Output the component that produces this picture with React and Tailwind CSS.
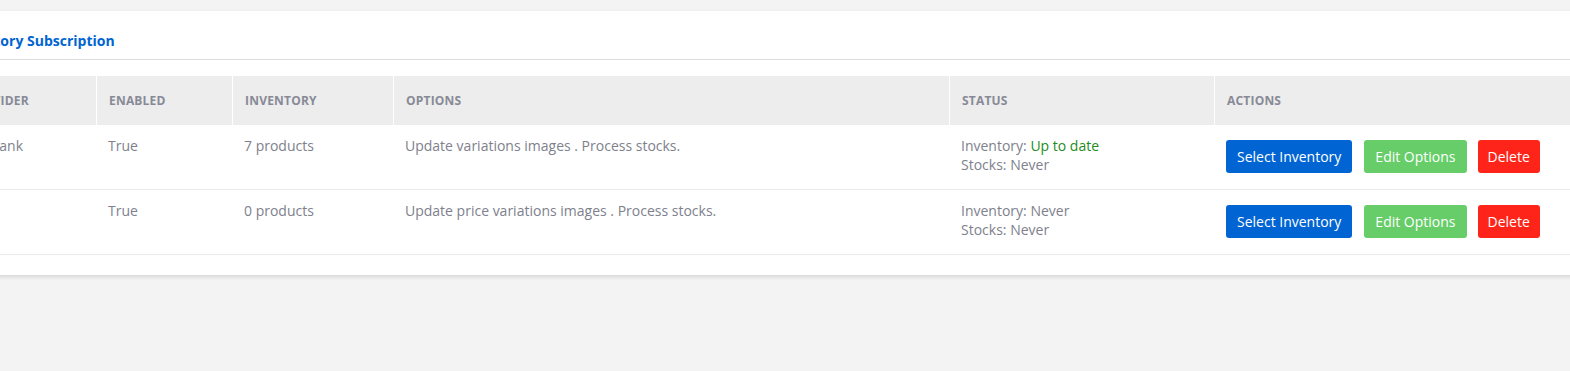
const cols = "grid grid-cols-[141px_136px_161px_556px_265px_1fr]";

const rows = [
  {
    provider: "My Bank",
    enabled: "True",
    inventory: "7 products",
    options: "Update variations images . Process stocks.",
    inv: "Up to date",
    stocks: "Never",
  },
  {
    provider: "",
    enabled: "True",
    inventory: "0 products",
    options: "Update price variations images . Process stocks.",
    inv: "Never",
    stocks: "Never",
  },
];

const Head = ({ children, first }) => (
  <div
    className={`h-[49px] flex items-center pl-[12px] text-[12px] font-bold tracking-[0.2px] text-[#878a96] ${
      first ? "" : "border-l border-white"
    }`}
  >
    {children}
  </div>
);

const Cell = ({ children }) => (
  <div className="pl-[12px] pt-[11px] pb-[10px] text-[14px] leading-[19px] text-[#7e818c]">
    {children}
  </div>
);

const Btn = ({ color, children, className = "" }) => (
  <button
    className={`h-[33px] rounded-[3px] text-white text-[14px] ${color} ${className}`}
  >
    {children}
  </button>
);

const Row = ({ row }) => (
  <div className={`${cols} h-[65px] border-b border-[#ebebeb]`}>
    <Cell>{row.provider}</Cell>
    <Cell>{row.enabled}</Cell>
    <Cell>{row.inventory}</Cell>
    <Cell>{row.options}</Cell>
    <Cell>
      <div>
        Inventory:{" "}
        <span className={row.inv === "Up to date" ? "text-[#1c8c1c]" : ""}>
          {row.inv}
        </span>
      </div>
      <div>Stocks: {row.stocks}</div>
    </Cell>
    <div className="pl-[12px] pt-[15px] flex items-start">
      <Btn color="bg-[#0064d2]" className="px-[11px]">Select Inventory</Btn>
      <Btn color="bg-[#66cd69]" className="px-[11px] ml-[12px]">Edit Options</Btn>
      <Btn color="bg-[#ff2419]" className="px-[10px] ml-[11px]">Delete</Btn>
    </div>
  </div>
);

export default function App() {
  return (
    <div className="w-full h-[371px] overflow-hidden bg-[#f3f3f3] pt-[11px] font-['Open_Sans',sans-serif]">
      <div className="ml-[-45px] w-[1660px] bg-white shadow-[0_2px_4px_rgba(0,0,0,0.12)] pb-[20px]">
        <div className="h-[49px] pt-[20px] pl-0 border-b border-[#dcdcdc] text-[14px] leading-[19px] font-bold text-[#0064d2]">
          Inventory Subscription
        </div>
        <div className="mt-[16px]">
          <div className={`${cols} bg-[#ededed]`}>
            <Head first>PROVIDER</Head>
            <Head>ENABLED</Head>
            <Head>INVENTORY</Head>
            <Head>OPTIONS</Head>
            <Head>STATUS</Head>
            <Head>ACTIONS</Head>
          </div>
          {rows.map((r, i) => (
            <Row key={i} row={r} />
          ))}
        </div>
      </div>
    </div>
  );
}
